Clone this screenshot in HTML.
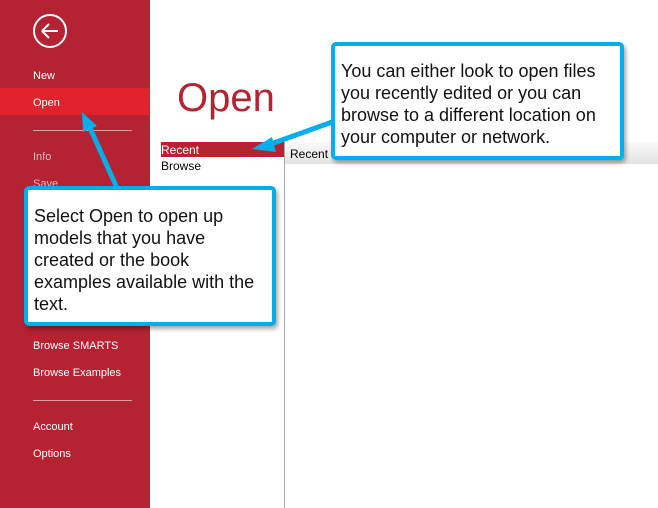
<!DOCTYPE html>
<html><head><style>
body{margin:0;width:658px;height:508px;position:relative;overflow:hidden;background:#fff;font-family:"Liberation Sans",Arial,sans-serif}
.side{position:absolute;left:0;top:0;width:150px;height:508px;background:#B52232}
.hl{position:absolute;left:0;top:88px;width:150px;height:27px;background:#E2232F}
.mi{position:absolute;left:33px;color:#fff;font-size:11px}
.sep{position:absolute;left:33px;width:99px;height:1px;background:#d9a0a6}
.box{position:absolute;border:4px solid #00AEEA;border-radius:5px;background:#fff;box-shadow:2px 3px 4px rgba(0,0,0,.35);font-size:18px;line-height:22px;color:#111;box-sizing:border-box;white-space:nowrap}
</style></head><body>
<div class="side"></div>
<div class="hl"></div>
<svg style="position:absolute;left:33px;top:14px" width="34" height="34"><circle cx="17" cy="17" r="16" fill="none" stroke="#fff" stroke-width="2"/><path d="M9 17H25M9 17L16 10M9 17L16 24" stroke="#fff" stroke-width="2" fill="none"/></svg>
<div class="mi" style="top:70px">New</div>
<div class="mi" style="top:97px">Open</div>
<div class="sep" style="top:130px"></div>
<div class="mi" style="top:151px;color:#e8b8bd">Info</div>
<div class="mi" style="top:178px;color:#e8b8bd">Save</div>
<div class="mi" style="top:340px">Browse SMARTS</div>
<div class="mi" style="top:367px">Browse Examples</div>
<div class="sep" style="top:400px"></div>
<div class="mi" style="top:421px">Account</div>
<div class="mi" style="top:448px">Options</div>
<div style="position:absolute;left:177px;top:76px;font-size:40px;color:#B52232">Open</div>
<div style="position:absolute;left:161px;top:142px;width:124px;height:15px;background:#B52232;color:#fff;font-size:12px;line-height:16px">Recent</div>
<div style="position:absolute;left:161px;top:158px;font-size:12px;line-height:16px;color:#000">Browse</div>
<div style="position:absolute;left:284px;top:142px;width:1px;height:366px;background:#aaa"></div>
<div style="position:absolute;left:285px;top:142px;width:373px;height:22px;background:linear-gradient(#fafafa,#e2e2e2);font-size:12px;line-height:24px;padding-left:5px">Recent</div>
<svg style="position:absolute;left:0;top:0" width="658" height="508">
<path d="M335 121L268 145" stroke="#00AEEA" stroke-width="5"/><path d="M252 149L272 137L276 152Z" fill="#00AEEA"/>
<path d="M117 188L90 128" stroke="#00AEEA" stroke-width="5"/><path d="M82 112L97 126L83 132Z" fill="#00AEEA"/>
</svg>
<div class="box" style="left:331px;top:42px;width:293px;height:118px;padding:14px 0 0 6px">You can either look to open files<br>you recently edited or you can<br>browse to a different location on<br>your computer or network.</div>
<div class="box" style="left:24px;top:186px;width:252px;height:140px;padding:15px 0 0 6px">Select Open to open up<br>models that you have<br>created or the book<br>examples available with the<br>text.</div>
</body></html>
